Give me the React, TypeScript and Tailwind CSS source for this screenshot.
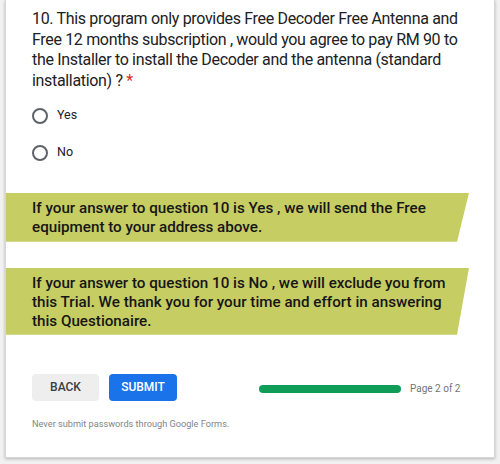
import React from 'react';

function Radio({ label }: { label: string }) {
  return (
    <label className="flex items-center gap-[9px] h-5">
      <span className="w-4 h-4 rounded-full border-2 border-[#5f6368] box-border" />
      <span className="text-[12.5px] text-[#202124]">{label}</span>
    </label>
  );
}

function Banner({ children, height }: { children: React.ReactNode; height: string }) {
  return (
    <div
      className={`w-[463px] bg-[#c6cd63] pl-[26px] pr-[12px] pt-[6px] ${height} [clip-path:polygon(0_0,100%_0,calc(100%-12px)_100%,0_100%)]`}
    >
      <p className="text-[15.2px] leading-[19px] font-medium text-[#161616]">{children}</p>
    </div>
  );
}

export default function App() {
  return (
    <div className="min-h-[464px] bg-[#f1f1f1] px-[5px] pb-[6px] font-['Roboto',sans-serif]">
      <div className="bg-white border-x border-b border-[#d6d6d6] shadow-[0_1px_3px_rgba(0,0,0,0.25)] h-[458px] flex flex-col">
        {/* Question */}
        <div className="pl-[26px] pr-6 pt-[9px]">
          <p className="text-[16px] tracking-[-0.33px] leading-[20.7px] text-[#202124]">
            10. This program only provides Free Decoder Free Antenna and Free 12 months subscription , would you
            agree to pay RM 90 to the Installer to install the Decoder and the antenna (standard installation) ?{' '}
            <span className="text-[#d93025]">*</span>
          </p>
          <div className="mt-[14px] flex flex-col gap-[17px]">
            <Radio label="Yes" />
            <Radio label="No" />
          </div>
        </div>

        {/* Info banners */}
        <div className="mt-[30px]">
          <Banner height="h-[49px]">
            If your answer to question 10 is Yes , we will send the Free equipment to your address above.
          </Banner>
        </div>
        <div className="mt-[26px]">
          <Banner height="h-[67px]">
            If your answer to question 10 is No , we will exclude you from this Trial. We thank you for your time and
            effort in answering this Questionaire.
          </Banner>
        </div>

        {/* Navigation */}
        <div className="mt-[39px] pl-[26px] flex items-center">
          <button className="w-[67px] h-[27px] rounded bg-[#eeeeee] text-[12px] font-medium text-[#3c3c3c]">
            BACK
          </button>
          <button className="ml-[10px] w-[68px] h-[27px] rounded bg-[#1a73e8] text-[12px] font-medium text-white">
            SUBMIT
          </button>
          <div className="ml-[82px] mt-[3px] w-[142px] h-2 rounded-full bg-[#0f9d58]" />
          <span className="ml-[9px] mt-[3px] text-[10px] text-[#70757a]">Page 2 of 2</span>
        </div>
        <p className="mt-[16px] pl-[26px] text-[9.2px] text-[#80868b]">Never submit passwords through Google Forms.</p>
      </div>
    </div>
  );
}
